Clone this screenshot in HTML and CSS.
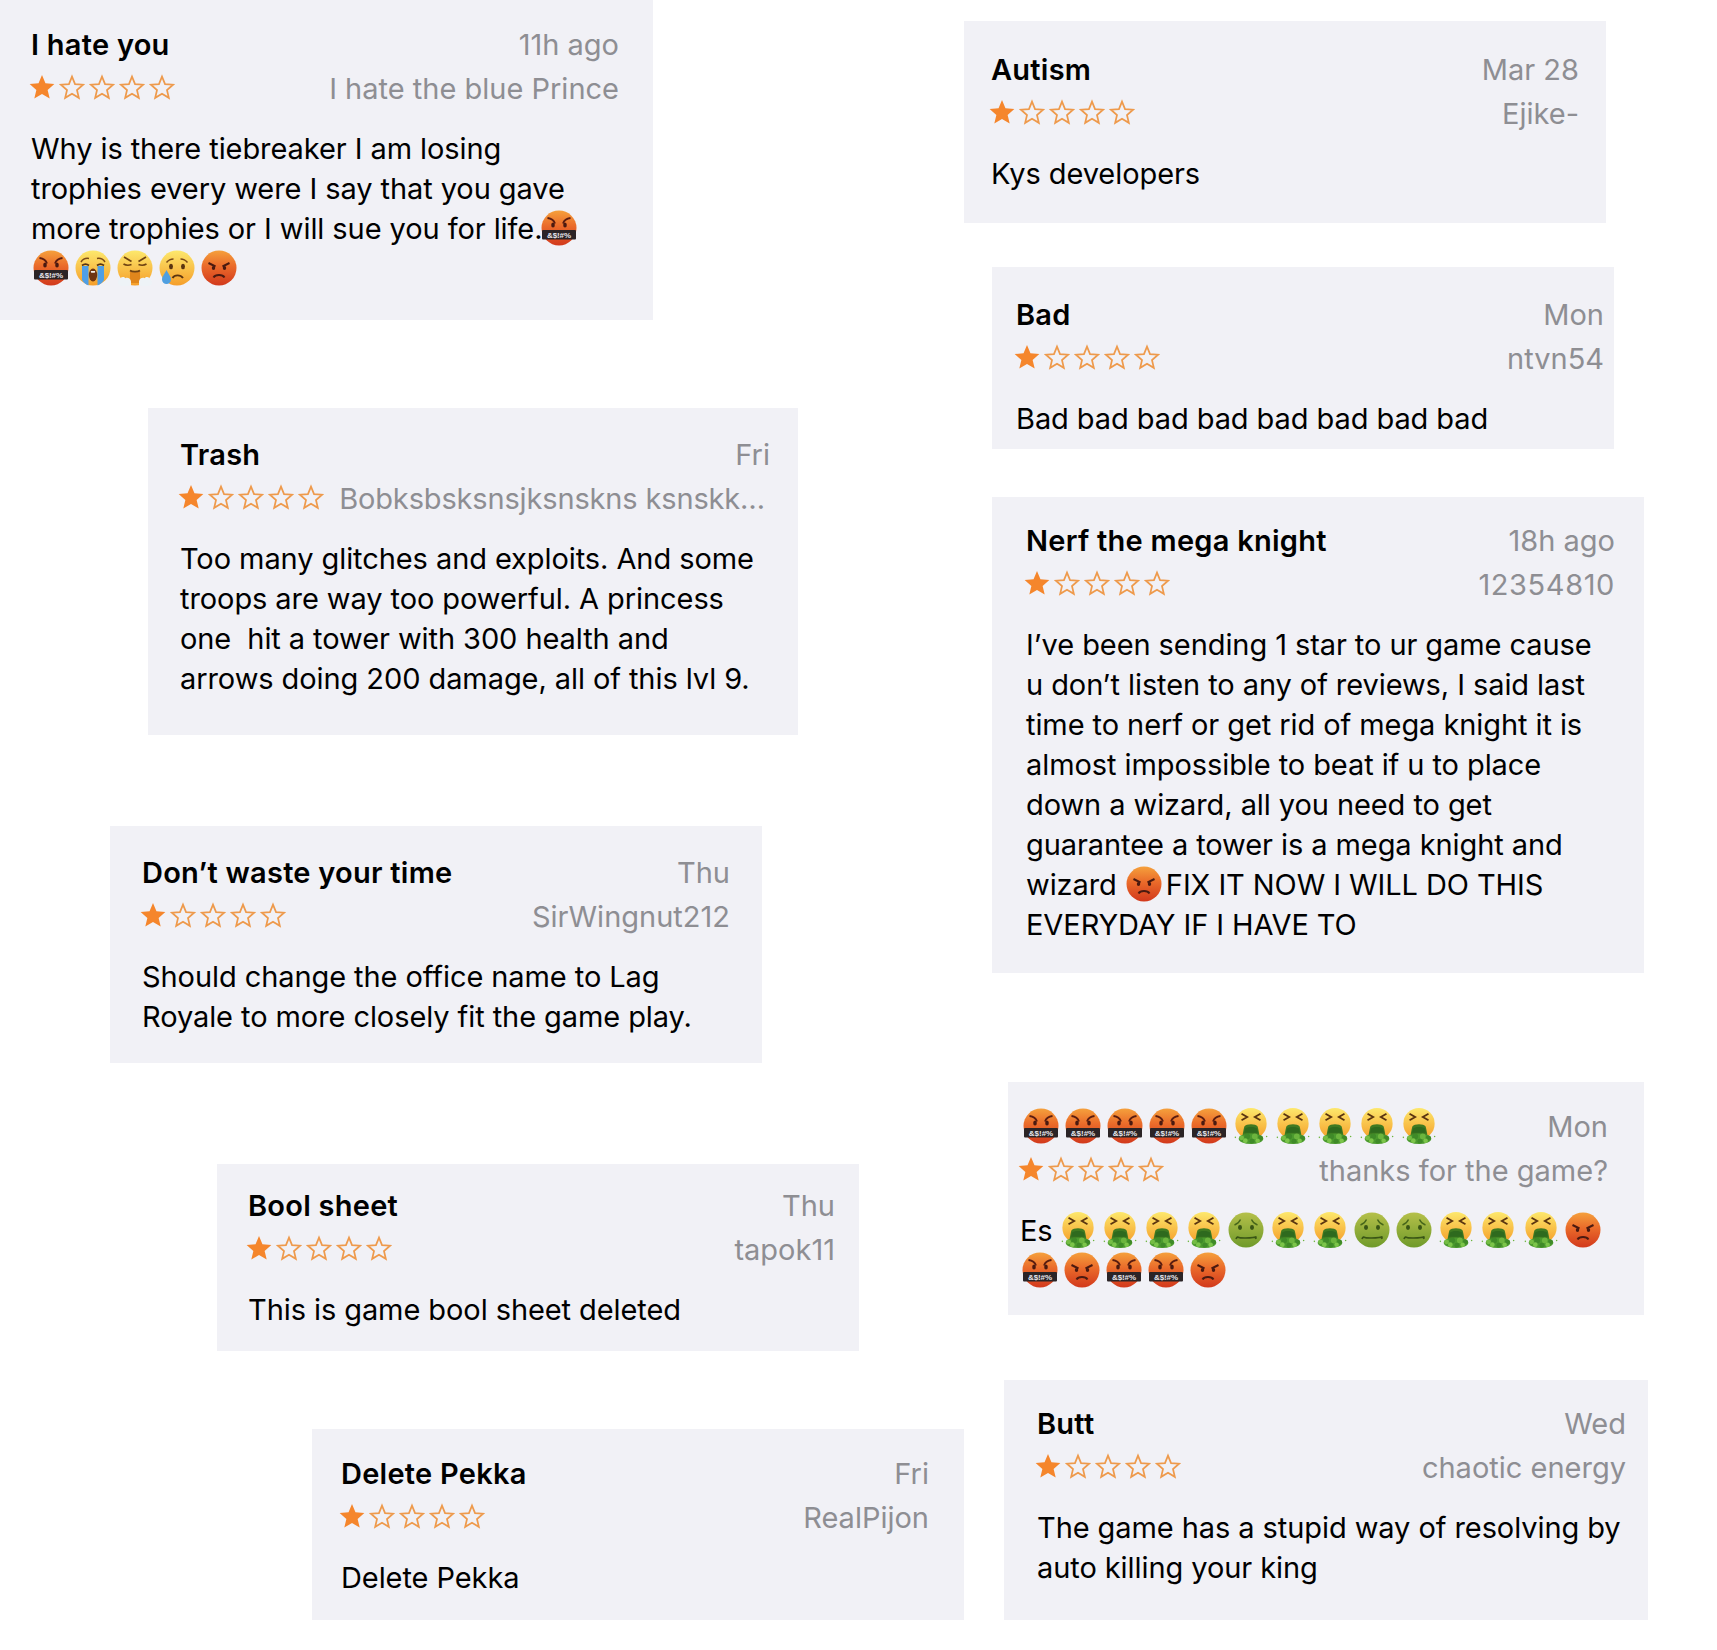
FILE: index.html
```html
<!DOCTYPE html>
<html lang="en">
<head>
    <meta charset="UTF-8">
    <meta name="viewport" content="width=device-width, initial-scale=1.0">
    <title>App Store Reviews</title>
    <link rel="stylesheet" href="styles.css">
</head>
<body>
    <svg class="sprites" width="0" height="0" aria-hidden="true">
        <defs>
            <linearGradient id="g-red" x1="0" y1="0" x2="0" y2="1">
                <stop offset="0" stop-color="#f5a03c"/>
                <stop offset="0.45" stop-color="#ea6a2a"/>
                <stop offset="1" stop-color="#d2391c"/>
            </linearGradient>
            <linearGradient id="g-yellow" x1="0" y1="0" x2="0" y2="1">
                <stop offset="0" stop-color="#fde86c"/>
                <stop offset="1" stop-color="#f59e2a"/>
            </linearGradient>
            <linearGradient id="g-green" x1="0" y1="0" x2="0" y2="1">
                <stop offset="0" stop-color="#b5c04a"/>
                <stop offset="1" stop-color="#6f9a2a"/>
            </linearGradient>
            <symbol id="star-full" viewBox="0 0 24 24">
                <path class="star-fill" d="M12 1l3.2 7.6 8.2.7-6.2 5.4 1.900 8L12 18.500l-7.100 4.200 1.900-8L.6 9.300l8.200-.7z"/>
            </symbol>
            <symbol id="star-empty" viewBox="0 0 24 24">
                <path class="star-line" d="M12 2.400l2.800 6.900 7.400.6-5.600 4.900 1.700 7.200L12 18.200l-6.300 3.800 1.700-7.200-5.600-4.900 7.400-.6z"/>
            </symbol>
            <symbol id="swear" viewBox="0 0 36 36">
                <circle cx="18" cy="18" r="17.500" fill="url(#g-red)"/>
                <path d="M6.500 8c3.500.5 6.500 2.500 7.500 5.500M29.500 8c-3.500.5-6.500 2.500-7.500 5.500" fill="none" stroke="#5a1c10" stroke-width="1.800"/>
                <ellipse cx="12" cy="15" rx="1.800" ry="2.600" fill="#4a1a10"/>
                <ellipse cx="24" cy="15" rx="1.800" ry="2.600" fill="#4a1a10"/>
                <rect x="1" y="20" width="34" height="9.500" rx="1" fill="#2b2426"/>
                <text x="18" y="27.800" text-anchor="middle" class="swear-text">&amp;$!#%</text>
            </symbol>
            <symbol id="angry" viewBox="0 0 36 36">
                <circle cx="18" cy="18" r="17.500" fill="url(#g-red)"/>
                <path d="M7.500 13l7 3.500M28.500 13l-7 3.500" stroke="#4a1a10" stroke-width="2"/>
                <ellipse cx="12.500" cy="18" rx="1.700" ry="2.100" fill="#4a1a10"/>
                <ellipse cx="23.500" cy="18" rx="1.700" ry="2.100" fill="#4a1a10"/>
                <path d="M12.500 27.500c2-3.200 9-3.200 11 0" fill="none" stroke="#4a1a10" stroke-width="2"/>
            </symbol>
            <symbol id="sob" viewBox="0 0 36 36">
                <circle cx="18" cy="18" r="17.500" fill="url(#g-yellow)"/>
                <path d="M6 12c2-3 5-4 8-3.500M30 12c-2-3-5-4-8-3.500" fill="none" stroke="#7a4a18" stroke-width="1.500"/>
                <path d="M7 15.500c2-1.500 5-1.500 7 0M22 15.500c2-1.500 5-1.500 7 0" fill="none" stroke="#5a3410" stroke-width="1.800"/>
                <path d="M7 16h6.500v19.500c-3-1-5-3-6.500-5.500zM22.500 16H29v14c-1.500 2.500-3.500 4.500-6.500 5.500z" fill="#4f9fe6"/>
                <ellipse cx="18" cy="25" rx="4.200" ry="6.500" fill="#6e3410"/>
                <path d="M15.800 21h4.400l-.4 1.800h-3.600z" fill="#f4f0e8"/>
            </symbol>
            <symbol id="triumph" viewBox="0 0 36 36">
                <circle cx="18" cy="18" r="17.500" fill="url(#g-yellow)"/>
                <path d="M7 7l7.500 4.500M29 7l-7.500 4.500M6.500 14c2.500 1.500 5.500 1.500 8 .5M29.500 14c-2.500 1.500-5.500 1.500-8 .5" fill="none" stroke="#6e4212" stroke-width="1.700"/>
                <path d="M13 21h10v12H13z" fill="#e0861c"/>
                <path d="M13 20.500c2 1.500 8 1.500 10 0" fill="none" stroke="#6e4212" stroke-width="1.700"/>
                <path d="M14 35c-3 1.500-8.500 1.500-11.500.3C.2 34 .5 30.500 2.800 30c0-3 4-4 5.600-1.800 2.200-1.200 5.600.5 5.600 3.300zM22 35c3 1.500 8.500 1.500 11.500.3 2.300-1.300 2-4.800-.3-5.300 0-3-4-4-5.600-1.800-2.200-1.200-5.600.5-5.600 3.300z" fill="#eef3f7"/>
            </symbol>
            <symbol id="cry" viewBox="0 0 36 36">
                <circle cx="18" cy="18" r="17.500" fill="url(#g-yellow)"/>
                <path d="M7.500 12.500c2-2.500 5-3.500 7-3.500M28.500 12.500c-2-2.500-5-3.500-7-3.500" fill="none" stroke="#7a4a18" stroke-width="1.500"/>
                <ellipse cx="12" cy="16.500" rx="2" ry="2.700" fill="#5a3410"/>
                <ellipse cx="24" cy="16.500" rx="2" ry="2.700" fill="#5a3410"/>
                <path d="M13.500 28c2-3.500 8-3.500 10.500 0" fill="none" stroke="#5a3410" stroke-width="1.900"/>
                <path d="M7.500 20c2 4 4.500 6.500 4.500 9.500a4.500 4.500 0 0 1-9 0c0-3 2.500-5.500 4.500-9.500z" fill="#4f9fe0"/>
            </symbol>
            <symbol id="vomit" viewBox="0 0 38 38">
                <circle cx="19" cy="16.500" r="16.500" fill="url(#g-yellow)"/>
                <path d="M9 6l6 3.500-6 3.500M29 6l-6 3.500 6 3.500" fill="none" stroke="#5a3410" stroke-width="1.900"/>
                <path d="M12 19.500c2-3 12-3 14 0 1 3.500 1.500 7 2 10H10c.5-3 1-6.500 2-10z" fill="#3f7a22"/>
                <path d="M12.500 22c2-2.500 11-2.500 13 0l.8 4H11.700z" fill="#2e6a1e"/>
                <ellipse cx="19" cy="32.500" rx="13" ry="5.500" fill="#4b9a2e"/>
                <circle cx="9" cy="31.500" r="2.600" fill="#75bd44"/>
                <circle cx="15" cy="30" r="3" fill="#3f8a28"/>
                <circle cx="23" cy="30" r="3" fill="#6cb53e"/>
                <circle cx="29" cy="31.500" r="2.600" fill="#3f8a28"/>
                <circle cx="13" cy="34.500" r="2.500" fill="#7cc54a"/>
                <circle cx="20" cy="35" r="2.600" fill="#3f8a28"/>
                <circle cx="26" cy="34.500" r="2.400" fill="#7cc54a"/>
                <circle cx="2.500" cy="31" r=".8" fill="#6cb53e"/>
                <circle cx="35.500" cy="30" r=".8" fill="#6cb53e"/>
            </symbol>
            <symbol id="nauseated" viewBox="0 0 36 36">
                <circle cx="18" cy="18" r="17.500" fill="url(#g-green)"/>
                <path d="M6.500 13c2.500-1 5-3 6-5.500M29.500 13c-2.500-1-5-3-6-5.500" fill="none" stroke="#46661a" stroke-width="1.400"/>
                <ellipse cx="12" cy="15.500" rx="2" ry="2.400" fill="#3a5516"/>
                <ellipse cx="24" cy="15.500" rx="2" ry="2.400" fill="#3a5516"/>
                <path d="M8 27c1-2.500 2-2 3-1.500s9 .8 14 0 2-1 3 1.500" fill="none" stroke="#3a5516" stroke-width="1.700"/>
            </symbol>
        </defs>
    </svg>

    <article class="card card-hate">
        <div class="row">
            <h3 class="title">I hate you</h3>
            <span class="meta">11h ago</span>
        </div>
        <div class="row">
            <span class="stars">
                <svg class="star"><use href="#star-full"/></svg><svg class="star"><use href="#star-empty"/></svg><svg class="star"><use href="#star-empty"/></svg><svg class="star"><use href="#star-empty"/></svg><svg class="star"><use href="#star-empty"/></svg>
            </span>
            <span class="meta">I hate the blue Prince</span>
        </div>
        <p class="body">Why is there tiebreaker I am losing<br>trophies every were I say that you gave<br>more trophies or I will sue you for life.<svg class="emoji"><use href="#swear"/></svg><br><svg class="emoji emoji-lead"><use href="#swear"/></svg> <svg class="emoji"><use href="#sob"/></svg> <svg class="emoji"><use href="#triumph"/></svg> <svg class="emoji"><use href="#cry"/></svg> <svg class="emoji"><use href="#angry"/></svg></p>
    </article>

    <article class="card card-trash">
        <div class="row">
            <h3 class="title">Trash</h3>
            <span class="meta">Fri</span>
        </div>
        <div class="row">
            <span class="stars">
                <svg class="star"><use href="#star-full"/></svg><svg class="star"><use href="#star-empty"/></svg><svg class="star"><use href="#star-empty"/></svg><svg class="star"><use href="#star-empty"/></svg><svg class="star"><use href="#star-empty"/></svg>
            </span>
            <span class="meta meta-cut">Bobksbsksnsjksnskns ksnskk…</span>
        </div>
        <p class="body">Too many glitches and exploits. And some<br>troops are way too powerful. A princess<br>one&nbsp; hit a tower with 300 health and<br>arrows doing 200 damage, all of this lvl 9.</p>
    </article>

    <article class="card card-time">
        <div class="row">
            <h3 class="title">Don’t waste your time</h3>
            <span class="meta">Thu</span>
        </div>
        <div class="row">
            <span class="stars">
                <svg class="star"><use href="#star-full"/></svg><svg class="star"><use href="#star-empty"/></svg><svg class="star"><use href="#star-empty"/></svg><svg class="star"><use href="#star-empty"/></svg><svg class="star"><use href="#star-empty"/></svg>
            </span>
            <span class="meta">SirWingnut212</span>
        </div>
        <p class="body">Should change the office name to Lag<br>Royale to more closely fit the game play.</p>
    </article>

    <article class="card card-bool">
        <div class="row">
            <h3 class="title">Bool sheet</h3>
            <span class="meta">Thu</span>
        </div>
        <div class="row">
            <span class="stars">
                <svg class="star"><use href="#star-full"/></svg><svg class="star"><use href="#star-empty"/></svg><svg class="star"><use href="#star-empty"/></svg><svg class="star"><use href="#star-empty"/></svg><svg class="star"><use href="#star-empty"/></svg>
            </span>
            <span class="meta">tapok11</span>
        </div>
        <p class="body">This is game bool sheet deleted</p>
    </article>

    <article class="card card-pekka">
        <div class="row">
            <h3 class="title">Delete Pekka</h3>
            <span class="meta">Fri</span>
        </div>
        <div class="row">
            <span class="stars">
                <svg class="star"><use href="#star-full"/></svg><svg class="star"><use href="#star-empty"/></svg><svg class="star"><use href="#star-empty"/></svg><svg class="star"><use href="#star-empty"/></svg><svg class="star"><use href="#star-empty"/></svg>
            </span>
            <span class="meta">RealPijon</span>
        </div>
        <p class="body">Delete Pekka</p>
    </article>

    <article class="card card-autism">
        <div class="row">
            <h3 class="title">Autism</h3>
            <span class="meta">Mar 28</span>
        </div>
        <div class="row">
            <span class="stars">
                <svg class="star"><use href="#star-full"/></svg><svg class="star"><use href="#star-empty"/></svg><svg class="star"><use href="#star-empty"/></svg><svg class="star"><use href="#star-empty"/></svg><svg class="star"><use href="#star-empty"/></svg>
            </span>
            <span class="meta">Ejike-</span>
        </div>
        <p class="body">Kys developers</p>
    </article>

    <article class="card card-bad">
        <div class="row">
            <h3 class="title">Bad</h3>
            <span class="meta">Mon</span>
        </div>
        <div class="row">
            <span class="stars">
                <svg class="star"><use href="#star-full"/></svg><svg class="star"><use href="#star-empty"/></svg><svg class="star"><use href="#star-empty"/></svg><svg class="star"><use href="#star-empty"/></svg><svg class="star"><use href="#star-empty"/></svg>
            </span>
            <span class="meta">ntvn54</span>
        </div>
        <p class="body">Bad bad bad bad bad bad bad bad</p>
    </article>

    <article class="card card-nerf">
        <div class="row">
            <h3 class="title">Nerf the mega knight</h3>
            <span class="meta">18h ago</span>
        </div>
        <div class="row">
            <span class="stars">
                <svg class="star"><use href="#star-full"/></svg><svg class="star"><use href="#star-empty"/></svg><svg class="star"><use href="#star-empty"/></svg><svg class="star"><use href="#star-empty"/></svg><svg class="star"><use href="#star-empty"/></svg>
            </span>
            <span class="meta meta-num">12354810</span>
        </div>
        <p class="body">I’ve been sending 1 star to ur game cause<br>u don’t listen to any of reviews, I said last<br>time to nerf or get rid of mega knight it is<br>almost impossible to beat if u to place<br>down a wizard, all you need to get<br>guarantee a tower is a mega knight and<br>wizard <svg class="emoji emoji-gap"><use href="#angry"/></svg>FIX IT NOW I WILL DO THIS<br>EVERYDAY IF I HAVE TO</p>
    </article>

    <article class="card card-emoji">
        <div class="row">
            <span class="title-emoji">
                <svg class="emoji"><use href="#swear"/></svg> <svg class="emoji"><use href="#swear"/></svg> <svg class="emoji"><use href="#swear"/></svg> <svg class="emoji"><use href="#swear"/></svg> <svg class="emoji"><use href="#swear"/></svg> <svg class="emoji"><use href="#vomit"/></svg> <svg class="emoji"><use href="#vomit"/></svg> <svg class="emoji"><use href="#vomit"/></svg> <svg class="emoji"><use href="#vomit"/></svg> <svg class="emoji"><use href="#vomit"/></svg>
            </span>
            <span class="meta">Mon</span>
        </div>
        <div class="row">
            <span class="stars">
                <svg class="star"><use href="#star-full"/></svg><svg class="star"><use href="#star-empty"/></svg><svg class="star"><use href="#star-empty"/></svg><svg class="star"><use href="#star-empty"/></svg><svg class="star"><use href="#star-empty"/></svg>
            </span>
            <span class="meta">thanks for the game?</span>
        </div>
        <p class="body">Es <svg class="emoji"><use href="#vomit"/></svg> <svg class="emoji"><use href="#vomit"/></svg> <svg class="emoji"><use href="#vomit"/></svg> <svg class="emoji"><use href="#vomit"/></svg> <svg class="emoji"><use href="#nauseated"/></svg> <svg class="emoji"><use href="#vomit"/></svg> <svg class="emoji"><use href="#vomit"/></svg> <svg class="emoji"><use href="#nauseated"/></svg> <svg class="emoji"><use href="#nauseated"/></svg> <svg class="emoji"><use href="#vomit"/></svg> <svg class="emoji"><use href="#vomit"/></svg> <svg class="emoji"><use href="#vomit"/></svg> <svg class="emoji"><use href="#angry"/></svg><br><svg class="emoji emoji-lead"><use href="#swear"/></svg> <svg class="emoji"><use href="#angry"/></svg> <svg class="emoji"><use href="#swear"/></svg> <svg class="emoji"><use href="#swear"/></svg> <svg class="emoji"><use href="#angry"/></svg></p>
    </article>

    <article class="card card-butt">
        <div class="row">
            <h3 class="title">Butt</h3>
            <span class="meta">Wed</span>
        </div>
        <div class="row">
            <span class="stars">
                <svg class="star"><use href="#star-full"/></svg><svg class="star"><use href="#star-empty"/></svg><svg class="star"><use href="#star-empty"/></svg><svg class="star"><use href="#star-empty"/></svg><svg class="star"><use href="#star-empty"/></svg>
            </span>
            <span class="meta">chaotic energy</span>
        </div>
        <p class="body">The game has a stupid way of resolving by<br>auto killing your king</p>
    </article>
</body>
</html>
```

FILE: styles.css
```css
body {
    font-family: 'Inter', 'Liberation Sans', sans-serif;
    background-color: #ffffff;
    color: #000000;
    margin: 0;
    width: 1717px;
    height: 1650px;
    position: relative;
    overflow: hidden;
}
.sprites {
    position: absolute;
}
.card {
    position: absolute;
    box-sizing: border-box;
    background: #f1f1f6;
    font-size: 29px;
    overflow: hidden;
}
.row {
    display: flex;
    justify-content: space-between;
    align-items: center;
    height: 44px;
}
.title {
    margin: 0;
    font-size: 29px;
    font-weight: 600;
    letter-spacing: 0.25px;
}
.meta {
    color: #8e8e93;
    white-space: nowrap;
}
.meta-cut {
    margin-right: 5px;
    letter-spacing: -0.15px;
}
.meta-num {
    letter-spacing: 0.6px;
}
.stars {
    display: flex;
    gap: 4px;
    margin: -3px 0 0 -2px;
}
.star {
    width: 26px;
    height: 26px;
}
.star-fill {
    fill: #f5862c;
}
.star-line {
    fill: none;
    stroke: #ee9a4c;
    stroke-width: 1.6;
}
.swear-text {
    font-family: 'Liberation Sans', sans-serif;
    font-size: 8px;
    font-weight: 700;
    fill: #e8e8ec;
}
.body {
    margin: 19px 0 0;
    line-height: 40px;
    white-space: nowrap;
    letter-spacing: -0.08px;
}
.emoji {
    width: 36px;
    height: 36px;
    margin: 0 -1px;
    vertical-align: -7px;
    overflow: visible;
}
.emoji-lead {
    margin-left: 2px;
}
.emoji-gap {
    margin: 0 4px 0 1px;
}
.title-emoji {
    display: flex;
    gap: 6px;
    margin-left: 3px;
}
.title-emoji .emoji {
    margin: 0;
}

/* collage: each cut-out sits where it was pasted */
.card-hate { left: 0; top: 0; width: 653px; height: 320px; padding: 22px 34px 0 31px; }
.card-trash { left: 148px; top: 408px; width: 650px; height: 327px; padding: 24px 28px 0 32px; }
.card-time { left: 110px; top: 826px; width: 652px; height: 237px; padding: 24px 32px 0 32px; }
.card-bool { left: 217px; top: 1164px; width: 642px; height: 187px; padding: 19px 24px 0 31px; }
.card-pekka { left: 312px; top: 1429px; width: 652px; height: 191px; padding: 22px 35px 0 29px; }
.card-autism { left: 964px; top: 21px; width: 642px; height: 202px; padding: 26px 27px 0 27px; }
.card-bad { left: 992px; top: 267px; width: 622px; height: 182px; padding: 25px 10px 0 24px; }
.card-nerf { left: 992px; top: 497px; width: 652px; height: 476px; padding: 21px 29px 0 34px; }
.card-emoji { left: 1008px; top: 1082px; width: 636px; height: 233px; padding: 22px 36px 0 12px; }
.card-butt { left: 1004px; top: 1380px; width: 644px; height: 240px; padding: 21px 22px 0 33px; }
```
